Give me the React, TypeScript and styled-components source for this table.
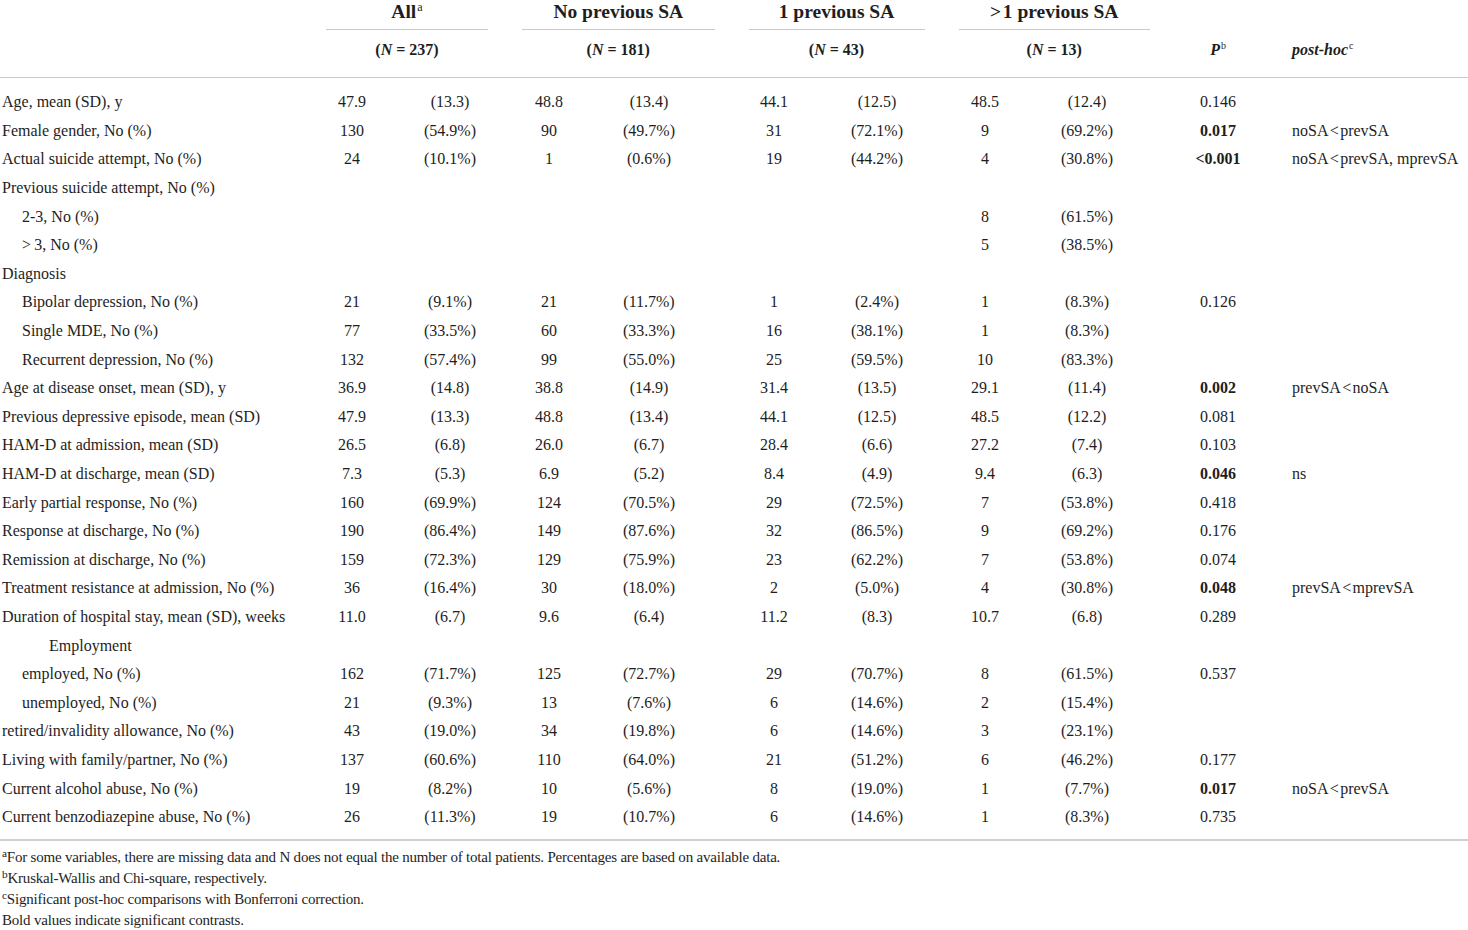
import React from "react";
import styled, { createGlobalStyle } from "styled-components";

const GlobalStyle = createGlobalStyle`
  html, body { margin: 0; padding: 0; background: #ffffff; }
  body { font-family: "Liberation Serif", "Times New Roman", serif; color: #1e1e1e; }
`;

const COLS = "309px 86px 110px 88px 138.5px 85px 125px 87px 138.5px 102px 1fr";

const Page = styled.div`
  width: 1468px;
  height: 930px;
  overflow: hidden;
  background: #ffffff;
`;

const Head = styled.div`
  border-bottom: 1px solid #c9c9c9;
`;

const HeadRow = styled.div`
  display: grid;
  grid-template-columns: ${COLS};
  align-items: end;
`;

const GroupTitle = styled.div<{ $start: number }>`
  grid-column: ${(p) => p.$start} / span 2;
  margin: 0 17px;
  padding-bottom: 5px;
  border-bottom: 1px solid #c9c9c9;
  text-align: center;
  font-size: 19.5px;
  font-weight: 700;
  line-height: 24px;
  white-space: nowrap;
`;

const SubHeadRow = styled(HeadRow)`
  padding: 10px 0 17px;
`;

const CountCell = styled.div<{ $start: number }>`
  grid-column: ${(p) => p.$start} / span 2;
  text-align: center;
  font-size: 16px;
  font-weight: 700;
  line-height: 20px;
  white-space: nowrap;
`;

const PHead = styled.div`
  grid-column: 10;
  text-align: center;
  font-size: 16px;
  font-weight: 700;
  font-style: italic;
  line-height: 20px;
`;

const PostHocHead = styled.div`
  grid-column: 11;
  padding-left: 23px;
  font-size: 16px;
  font-weight: 700;
  font-style: italic;
  line-height: 20px;
`;

const Sup = styled.sup`
  font-size: 0.62em;
  font-weight: 400;
  font-style: normal;
  line-height: 0;
  vertical-align: 0.6em;
  margin-left: 1px;
`;

const Body = styled.div`
  padding: 10px 0 8px;
  border-bottom: 2px solid #cfcfcf;
`;

const Row = styled.div`
  display: grid;
  grid-template-columns: ${COLS};
  height: 28.6px;
  align-items: center;
  font-size: 16px;
  line-height: 20px;
`;

const Label = styled.div<{ $indent: number }>`
  padding-left: ${(p) => 2 + p.$indent}px;
  white-space: nowrap;
`;

const Num = styled.div`
  text-align: center;
  white-space: nowrap;
`;

const Pct = styled.div<{ $pad: number }>`
  text-align: center;
  padding-right: ${(p) => p.$pad}px;
  white-space: nowrap;
`;

const PVal = styled.div<{ $bold: boolean }>`
  text-align: center;
  font-weight: ${(p) => (p.$bold ? 700 : 400)};
  white-space: nowrap;
`;

const PostHoc = styled.div`
  padding-left: 23px;
  white-space: nowrap;
`;

const Notes = styled.div`
  padding-top: 6px;
`;

const Note = styled.div`
  font-size: 15px;
  line-height: 21px;
  padding-left: 2px;
  white-space: nowrap;
  letter-spacing: -0.2px;
`;

const NoteMark = styled.sup`
  font-size: 0.75em;
  line-height: 0;
  vertical-align: 0.45em;
`;

type Cell = [string, string] | null;
type RowData = {
  label: string;
  indent?: number;
  cells?: Cell[];
  p?: string;
  bold?: boolean;
  post?: string;
};

const LT = "\u200a<\u200a";

const rows: RowData[] = [
  { label: "Age, mean (SD), y", cells: [["47.9", "(13.3)"], ["48.8", "(13.4)"], ["44.1", "(12.5)"], ["48.5", "(12.4)"]], p: "0.146" },
  { label: "Female gender, No (%)", cells: [["130", "(54.9%)"], ["90", "(49.7%)"], ["31", "(72.1%)"], ["9", "(69.2%)"]], p: "0.017", bold: true, post: `noSA${LT}prevSA` },
  { label: "Actual suicide attempt, No (%)", cells: [["24", "(10.1%)"], ["1", "(0.6%)"], ["19", "(44.2%)"], ["4", "(30.8%)"]], p: "<0.001", bold: true, post: `noSA${LT}prevSA, mprevSA` },
  { label: "Previous suicide attempt, No (%)" },
  { label: "2-3, No (%)", indent: 20, cells: [null, null, null, ["8", "(61.5%)"]] },
  { label: ">\u20093, No (%)", indent: 20, cells: [null, null, null, ["5", "(38.5%)"]] },
  { label: "Diagnosis" },
  { label: "Bipolar depression, No (%)", indent: 20, cells: [["21", "(9.1%)"], ["21", "(11.7%)"], ["1", "(2.4%)"], ["1", "(8.3%)"]], p: "0.126" },
  { label: "Single MDE, No (%)", indent: 20, cells: [["77", "(33.5%)"], ["60", "(33.3%)"], ["16", "(38.1%)"], ["1", "(8.3%)"]] },
  { label: "Recurrent depression, No (%)", indent: 20, cells: [["132", "(57.4%)"], ["99", "(55.0%)"], ["25", "(59.5%)"], ["10", "(83.3%)"]] },
  { label: "Age at disease onset, mean (SD), y", cells: [["36.9", "(14.8)"], ["38.8", "(14.9)"], ["31.4", "(13.5)"], ["29.1", "(11.4)"]], p: "0.002", bold: true, post: `prevSA${LT}noSA` },
  { label: "Previous depressive episode, mean (SD)", cells: [["47.9", "(13.3)"], ["48.8", "(13.4)"], ["44.1", "(12.5)"], ["48.5", "(12.2)"]], p: "0.081" },
  { label: "HAM-D at admission, mean (SD)", cells: [["26.5", "(6.8)"], ["26.0", "(6.7)"], ["28.4", "(6.6)"], ["27.2", "(7.4)"]], p: "0.103" },
  { label: "HAM-D at discharge, mean (SD)", cells: [["7.3", "(5.3)"], ["6.9", "(5.2)"], ["8.4", "(4.9)"], ["9.4", "(6.3)"]], p: "0.046", bold: true, post: "ns" },
  { label: "Early partial response, No (%)", cells: [["160", "(69.9%)"], ["124", "(70.5%)"], ["29", "(72.5%)"], ["7", "(53.8%)"]], p: "0.418" },
  { label: "Response at discharge, No (%)", cells: [["190", "(86.4%)"], ["149", "(87.6%)"], ["32", "(86.5%)"], ["9", "(69.2%)"]], p: "0.176" },
  { label: "Remission at discharge, No (%)", cells: [["159", "(72.3%)"], ["129", "(75.9%)"], ["23", "(62.2%)"], ["7", "(53.8%)"]], p: "0.074" },
  { label: "Treatment resistance at admission, No (%)", cells: [["36", "(16.4%)"], ["30", "(18.0%)"], ["2", "(5.0%)"], ["4", "(30.8%)"]], p: "0.048", bold: true, post: `prevSA${LT}mprevSA` },
  { label: "Duration of hospital stay, mean (SD), weeks", cells: [["11.0", "(6.7)"], ["9.6", "(6.4)"], ["11.2", "(8.3)"], ["10.7", "(6.8)"]], p: "0.289" },
  { label: "Employment", indent: 47 },
  { label: "employed, No (%)", indent: 20, cells: [["162", "(71.7%)"], ["125", "(72.7%)"], ["29", "(70.7%)"], ["8", "(61.5%)"]], p: "0.537" },
  { label: "unemployed, No (%)", indent: 20, cells: [["21", "(9.3%)"], ["13", "(7.6%)"], ["6", "(14.6%)"], ["2", "(15.4%)"]] },
  { label: "retired/invalidity allowance, No (%)", cells: [["43", "(19.0%)"], ["34", "(19.8%)"], ["6", "(14.6%)"], ["3", "(23.1%)"]] },
  { label: "Living with family/partner, No (%)", cells: [["137", "(60.6%)"], ["110", "(64.0%)"], ["21", "(51.2%)"], ["6", "(46.2%)"]], p: "0.177" },
  { label: "Current alcohol abuse, No (%)", cells: [["19", "(8.2%)"], ["10", "(5.6%)"], ["8", "(19.0%)"], ["1", "(7.7%)"]], p: "0.017", bold: true, post: `noSA${LT}prevSA` },
  { label: "Current benzodiazepine abuse, No (%)", cells: [["26", "(11.3%)"], ["19", "(10.7%)"], ["6", "(14.6%)"], ["1", "(8.3%)"]], p: "0.735" },
];

const pctPad = [0, 26.5, 4, 21.5];

const groups = [
  { start: 2, title: "All", sup: "a", n: "237" },
  { start: 4, title: "No previous SA", n: "181" },
  { start: 6, title: "1 previous SA", n: "43" },
  { start: 8, title: ">\u200a1 previous SA", n: "13" },
];

export default function App() {
  return (
    <Page>
      <GlobalStyle />
      <Head>
        <HeadRow>
          {groups.map((g) => (
            <GroupTitle key={g.start} $start={g.start}>
              {g.title}
              {g.sup && <Sup>{g.sup}</Sup>}
            </GroupTitle>
          ))}
        </HeadRow>
        <SubHeadRow>
          {groups.map((g) => (
            <CountCell key={g.start} $start={g.start}>
              (<i>N</i> = {g.n})
            </CountCell>
          ))}
          <PHead>
            P<Sup>b</Sup>
          </PHead>
          <PostHocHead>
            post-hoc<Sup>c</Sup>
          </PostHocHead>
        </SubHeadRow>
      </Head>
      <Body>
        {rows.map((r, i) => (
          <Row key={i}>
            <Label $indent={r.indent ?? 0}>{r.label}</Label>
            {[0, 1, 2, 3].map((k) => {
              const c = r.cells ? r.cells[k] : null;
              return (
                <React.Fragment key={k}>
                  <Num>{c ? c[0] : ""}</Num>
                  <Pct $pad={pctPad[k]}>{c ? c[1] : ""}</Pct>
                </React.Fragment>
              );
            })}
            <PVal $bold={!!r.bold}>{r.p ?? ""}</PVal>
            <PostHoc>{r.post ?? ""}</PostHoc>
          </Row>
        ))}
      </Body>
      <Notes>
        <Note>
          <NoteMark>a</NoteMark>For some variables, there are missing data and N does not equal the number of total patients. Percentages are based on available data.
        </Note>
        <Note>
          <NoteMark>b</NoteMark>Kruskal-Wallis and Chi-square, respectively.
        </Note>
        <Note>
          <NoteMark>c</NoteMark>Significant post-hoc comparisons with Bonferroni correction.
        </Note>
        <Note>Bold values indicate significant contrasts.</Note>
      </Notes>
    </Page>
  );
}
